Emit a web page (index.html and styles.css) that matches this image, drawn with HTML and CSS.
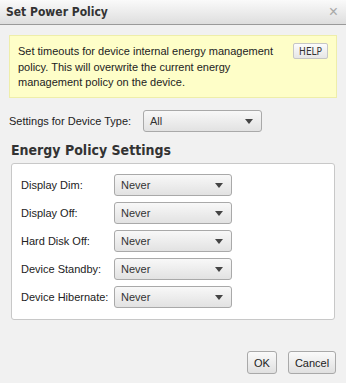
FILE: index.html
```html
<!DOCTYPE html>
<html lang="en">
<head>
    <meta charset="UTF-8">
    <title>Set Power Policy</title>
    <link rel="stylesheet" href="styles.css">
</head>
<body>
    <div class="dialog">
        <div class="dialog-title">
            <h1>Set Power Policy</h1>
            <span class="close">&times;</span>
        </div>

        <div class="dialog-body">
            <div class="notice">
                <p>Set timeouts for device internal energy management policy. This will overwrite the current energy management policy on the device.</p>
                <button class="help-btn">HELP</button>
            </div>

            <div class="device-type">
                <label>Settings for Device Type:</label>
                <div class="select wide"><span>All</span><i class="arrow"></i></div>
            </div>

            <h2>Energy Policy Settings</h2>
            <div class="panel">
                <div class="row">
                    <label>Display Dim:</label>
                    <div class="select"><span>Never</span><i class="arrow"></i></div>
                </div>
                <div class="row">
                    <label>Display Off:</label>
                    <div class="select"><span>Never</span><i class="arrow"></i></div>
                </div>
                <div class="row">
                    <label>Hard Disk Off:</label>
                    <div class="select"><span>Never</span><i class="arrow"></i></div>
                </div>
                <div class="row">
                    <label>Device Standby:</label>
                    <div class="select"><span>Never</span><i class="arrow"></i></div>
                </div>
                <div class="row">
                    <label>Device Hibernate:</label>
                    <div class="select"><span>Never</span><i class="arrow"></i></div>
                </div>
            </div>
        </div>

        <div class="dialog-footer">
            <button class="btn ok">OK</button>
            <button class="btn cancel">Cancel</button>
        </div>
    </div>
</body>
</html>
```

FILE: styles.css
```css
* {
    margin: 0;
    padding: 0;
    box-sizing: border-box;
}

body {
    font-family: 'Liberation Sans', Arial, sans-serif;
    font-size: 11px;
    color: #222222;
    background-color: #f1f1f1;
    width: 346px;
    height: 383px;
    overflow: hidden;
}

.dialog {
    height: 383px;
    display: flex;
    flex-direction: column;
    background-color: #f1f1f1;
}

.dialog-title {
    height: 25px;
    display: flex;
    align-items: center;
    justify-content: space-between;
    padding: 0 8px 0 6px;
    background: linear-gradient(#fafafa, #dedede);
    border-bottom: 1px solid #9a9a9a;
}

.dialog-title h1 {
    font-family: 'DejaVu Sans Condensed', 'DejaVu Sans', sans-serif;
    font-size: 12px;
    font-weight: bold;
    color: #333333;
}

.close {
    color: #a8a8a8;
    font-size: 16px;
    line-height: 1;
}

.dialog-body {
    padding: 10px 9px 0 9px;
}

.notice {
    display: flex;
    justify-content: space-between;
    align-items: flex-start;
    background-color: #fefec8;
    border: 1px solid #eeeeaa;
    padding: 8px 8px 7px 8px;
    height: 63px;
}

.notice p {
    width: 262px;
    line-height: 15.5px;
}

.help-btn {
    font-family: 'DejaVu Sans Condensed', 'DejaVu Sans', sans-serif;
    font-size: 10px;
    color: #333333;
    background: linear-gradient(#fcfcfc, #e6e6e6);
    border: 1px solid #c6c6c6;
    border-radius: 2px;
    padding: 0 5px;
    height: 16px;
    margin-top: -1px;
}

.device-type {
    display: flex;
    align-items: center;
    margin-top: 12px;
}

.device-type label {
    width: 134px;
}

.select {
    width: 118px;
    height: 22px;
    display: flex;
    align-items: center;
    justify-content: space-between;
    padding: 0 8px 0 6px;
    background: linear-gradient(#f8f8f8, #e2e2e2);
    border: 1px solid #a9a9a9;
    border-radius: 3px;
    color: #333333;
}

.select.wide {
    width: 119px;
}

.arrow {
    width: 0;
    height: 0;
    border-left: 4px solid transparent;
    border-right: 4px solid transparent;
    border-top: 5px solid #444444;
}

h2 {
    font-family: 'DejaVu Sans Condensed', 'DejaVu Sans', sans-serif;
    font-size: 14px;
    font-weight: bold;
    color: #333333;
    margin: 10px 0 5px 2px;
}

.panel {
    margin-left: 2px;
    width: 324px;
    background-color: #ffffff;
    border: 1px solid #c8c8c8;
    border-radius: 3px;
    padding: 10px 0 11px 9px;
    display: flex;
    flex-direction: column;
    gap: 6px;
}

.row {
    display: flex;
    align-items: center;
}

.row label {
    width: 93px;
}

.dialog-footer {
    margin-top: auto;
    display: flex;
    justify-content: flex-end;
    gap: 11px;
    padding: 0 10px 9px 0;
}

.btn {
    font-family: inherit;
    font-size: 11px;
    color: #222222;
    height: 23px;
    background: linear-gradient(#fafafa, #e0e0e0);
    border: 1px solid #a9a9a9;
    border-radius: 3px;
}

.btn.ok {
    width: 30px;
}

.btn.cancel {
    width: 48px;
}
```
